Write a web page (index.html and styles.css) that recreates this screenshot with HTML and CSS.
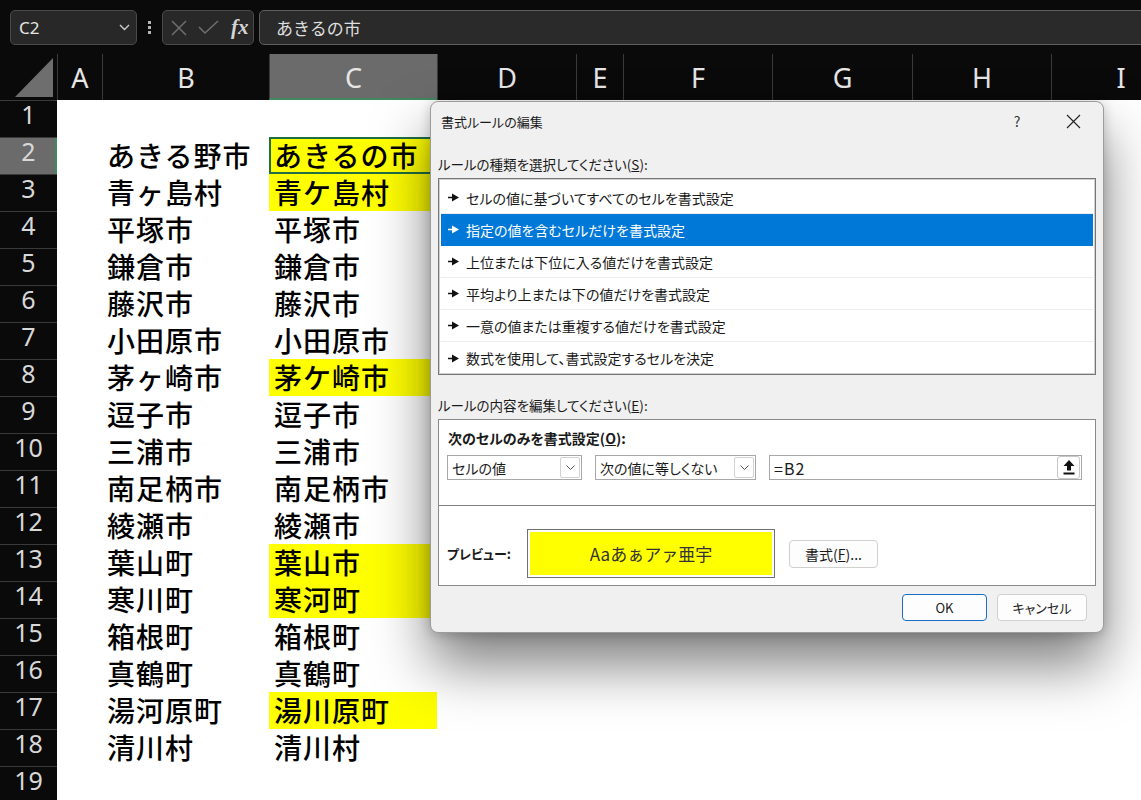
FILE: index.html
```html
<!DOCTYPE html>
<html lang="ja">
<head>
  <meta charset="UTF-8" />
  <title>書式ルールの編集</title>
  <link rel="stylesheet" href="styles.css">
</head>
<body>
  <!-- 数式バー -->
  <div class="formula-bar">
    <div class="name-box">
      <span>C2</span>
      <svg width="11" height="7" viewBox="0 0 11 7"><polyline points="1,1 5.5,5.5 10,1" fill="none" stroke="#cfcfcf" stroke-width="1.4"/></svg>
    </div>
    <div class="dots"><i></i><i></i><i></i></div>
    <div class="func-box">
      <svg width="16" height="16" viewBox="0 0 16 16"><path d="M1 1 L15 15 M15 1 L1 15" stroke="#6f6f6f" stroke-width="1.5"/></svg>
      <svg width="21" height="15" viewBox="0 0 21 15"><polyline points="1,7 7,13 20,1" fill="none" stroke="#6f6f6f" stroke-width="1.5"/></svg>
      <span class="fx">fx</span>
    </div>
    <div class="formula">あきるの市</div>
  </div>

  <!-- シート -->
  <div class="sheet">
    <div class="col-head">
      <div class="corner"><svg width="57" height="46" viewBox="0 0 57 46"><polygon points="15,43 53,4 53,43" fill="#6e6e6e"/></svg></div>
      <div>A</div><div>B</div><div class="active">C</div><div>D</div><div>E</div><div>F</div><div>G</div><div>H</div><div>I</div>
    </div>

    <div class="row"><span class="rh">1</span><span></span><span class="cell"></span><span class="cell"></span></div>
    <div class="row"><span class="rh active">2</span><span></span><span class="cell">あきる野市</span><span class="cell hl sel">あきるの市</span></div>
    <div class="row"><span class="rh">3</span><span></span><span class="cell">青ヶ島村</span><span class="cell hl">青ケ島村</span></div>
    <div class="row"><span class="rh">4</span><span></span><span class="cell">平塚市</span><span class="cell">平塚市</span></div>
    <div class="row"><span class="rh">5</span><span></span><span class="cell">鎌倉市</span><span class="cell">鎌倉市</span></div>
    <div class="row"><span class="rh">6</span><span></span><span class="cell">藤沢市</span><span class="cell">藤沢市</span></div>
    <div class="row"><span class="rh">7</span><span></span><span class="cell">小田原市</span><span class="cell">小田原市</span></div>
    <div class="row"><span class="rh">8</span><span></span><span class="cell">茅ヶ崎市</span><span class="cell hl">茅ケ崎市</span></div>
    <div class="row"><span class="rh">9</span><span></span><span class="cell">逗子市</span><span class="cell">逗子市</span></div>
    <div class="row"><span class="rh">10</span><span></span><span class="cell">三浦市</span><span class="cell">三浦市</span></div>
    <div class="row"><span class="rh">11</span><span></span><span class="cell">南足柄市</span><span class="cell">南足柄市</span></div>
    <div class="row"><span class="rh">12</span><span></span><span class="cell">綾瀬市</span><span class="cell">綾瀬市</span></div>
    <div class="row"><span class="rh">13</span><span></span><span class="cell">葉山町</span><span class="cell hl">葉山市</span></div>
    <div class="row"><span class="rh">14</span><span></span><span class="cell">寒川町</span><span class="cell hl">寒河町</span></div>
    <div class="row"><span class="rh">15</span><span></span><span class="cell">箱根町</span><span class="cell">箱根町</span></div>
    <div class="row"><span class="rh">16</span><span></span><span class="cell">真鶴町</span><span class="cell">真鶴町</span></div>
    <div class="row"><span class="rh">17</span><span></span><span class="cell">湯河原町</span><span class="cell hl">湯川原町</span></div>
    <div class="row"><span class="rh">18</span><span></span><span class="cell">清川村</span><span class="cell">清川村</span></div>
    <div class="row"><span class="rh">19</span><span></span><span class="cell"></span><span class="cell"></span></div>
  </div>

  <!-- ダイアログ -->
  <div class="dialog">
    <div class="dlg-title">
      <span>書式ルールの編集</span>
      <span class="tbtn help">?</span>
      <span class="tbtn"><svg width="15" height="15" viewBox="0 0 15 15"><path d="M1 1 L14 14 M14 1 L1 14" stroke="#222" stroke-width="1.1"/></svg></span>
    </div>

    <div class="dlg-body">
      <div class="lbl">ルールの種類を選択してください(<u>S</u>):</div>
      <div class="rule-list">
        <div class="item"><svg class="arw" width="11" height="9" viewBox="0 0 11 9"><path d="M0 3.7 H5 V5.3 H0 Z M4 0.5 L11 4.5 L4 8.5 Z"/></svg>セルの値に基づいてすべてのセルを書式設定</div>
        <div class="item selected"><svg class="arw" width="11" height="9" viewBox="0 0 11 9"><path d="M0 3.7 H5 V5.3 H0 Z M4 0.5 L11 4.5 L4 8.5 Z"/></svg>指定の値を含むセルだけを書式設定</div>
        <div class="item"><svg class="arw" width="11" height="9" viewBox="0 0 11 9"><path d="M0 3.7 H5 V5.3 H0 Z M4 0.5 L11 4.5 L4 8.5 Z"/></svg>上位または下位に入る値だけを書式設定</div>
        <div class="item"><svg class="arw" width="11" height="9" viewBox="0 0 11 9"><path d="M0 3.7 H5 V5.3 H0 Z M4 0.5 L11 4.5 L4 8.5 Z"/></svg>平均より上または下の値だけを書式設定</div>
        <div class="item"><svg class="arw" width="11" height="9" viewBox="0 0 11 9"><path d="M0 3.7 H5 V5.3 H0 Z M4 0.5 L11 4.5 L4 8.5 Z"/></svg>一意の値または重複する値だけを書式設定</div>
        <div class="item last"><svg class="arw" width="11" height="9" viewBox="0 0 11 9"><path d="M0 3.7 H5 V5.3 H0 Z M4 0.5 L11 4.5 L4 8.5 Z"/></svg>数式を使用して、書式設定するセルを決定</div>
      </div>

      <div class="lbl lbl2">ルールの内容を編集してください(<u>E</u>):</div>
      <div class="panel">
        <div class="cond">
          <div class="cond-head">次のセルのみを書式設定(<u>O</u>):</div>
          <div class="controls">
            <div class="select s1">セルの値<span class="chev"><svg width="9" height="5" viewBox="0 0 9 5"><polyline points="0.5,0.5 4.5,4.5 8.5,0.5" fill="none" stroke="#555" stroke-width="1"/></svg></span></div>
            <div class="select s2">次の値に等しくない<span class="chev"><svg width="9" height="5" viewBox="0 0 9 5"><polyline points="0.5,0.5 4.5,4.5 8.5,0.5" fill="none" stroke="#555" stroke-width="1"/></svg></span></div>
            <div class="select ref">=B2<span class="up"><svg width="12" height="15" viewBox="0 0 12 15"><path d="M6 0 L11.5 6 H8 V10.5 H4 V6 H0.5 Z M0.5 12.5 H11.5 V14.5 H0.5 Z" fill="#111"/></svg></span></div>
          </div>
        </div>
        <div class="preview-row">
          <div class="pv-label">プレビュー:</div>
          <div class="pv-box"><div class="pv-fill">Aaあぁアァ亜宇</div></div>
          <div class="btn fmt">書式(<u>F</u>)...</div>
        </div>
      </div>

      <div class="btn-row">
        <div class="btn ok">OK</div>
        <div class="btn cancel">キャンセル</div>
      </div>
    </div>
  </div>
</body>
</html>
```

FILE: styles.css
```css
body {
  margin: 0;
  width: 1141px;
  height: 800px;
  overflow: hidden;
  position: relative;
  background: #0a0a0a;
  font-family: "Noto Sans CJK JP", sans-serif;
}

/* formula bar */
.formula-bar {
  display: flex;
  height: 35px;
  padding: 10px 0 9px 10px;
}
.name-box {
  width: 127px;
  box-sizing: border-box;
  border: 1px solid #4a4a4a;
  border-radius: 5px;
  background: #282828;
  display: flex;
  align-items: center;
  justify-content: space-between;
  padding: 0 6px 0 8px;
  color: #e4e4e4;
  font-family: "Noto Sans", sans-serif;
  font-size: 17px;
}
.dots {
  width: 25px;
  display: flex;
  flex-direction: column;
  align-items: center;
  justify-content: center;
  gap: 2px;
}
.dots i {
  width: 3px;
  height: 3px;
  background: #b5b5b5;
}
.func-box {
  width: 92px;
  box-sizing: border-box;
  border: 1px solid #4a4a4a;
  border-radius: 5px;
  background: #282828;
  display: flex;
  align-items: center;
  padding-left: 8px;
  gap: 11px;
}
.fx {
  font-family: "Liberation Serif", serif;
  font-style: italic;
  font-weight: bold;
  font-size: 21px;
  color: #d4d4d4;
  margin-left: 1px;
}
.formula {
  flex: 1;
  margin-left: 5px;
  margin-right: -10px;
  border: 1px solid #5e5e5e;
  border-radius: 5px;
  background: #2a2a2a;
  color: #dedede;
  font-size: 17px;
  line-height: 33px;
  padding-left: 16px;
}

/* sheet */
.col-head {
  display: grid;
  grid-template-columns: 57px 45px 167px 168px 139px 47px 149px 140px 139px 139px;
  height: 46px;
}
.col-head div {
  border-left: 1px solid #3a3a3a;
  color: #e6e6e6;
  font-family: "Noto Sans", sans-serif;
  font-size: 27px;
  display: flex;
  align-items: center;
  justify-content: center;
}
.col-head .corner {
  border-left: none;
  align-items: flex-start;
  justify-content: flex-start;
}
.col-head .active {
  background: #6b6b6b;
  border-bottom: 2px solid #3f8a5f;
  box-sizing: border-box;
  padding-top: 2px;
}
.row {
  display: grid;
  grid-template-columns: 57px 45px 167px 168px 1fr;
  height: 37px;
  background: #fff;
}
.rh {
  background: #0a0a0a;
  color: #d8d8d8;
  border-top: 1px solid #3a3a3a;
  font-family: "Noto Sans", sans-serif;
  font-size: 25px;
  line-height: 26px;
  text-align: center;
}
.rh.active {
  background: #6b6b6b;
  box-shadow: inset -2px 0 0 #3f8a5f;
}
.cell {
  font-size: 28px;
  font-weight: 500;
  color: #000;
  line-height: 37px;
  letter-spacing: 1px;
  padding-left: 5px;
  white-space: nowrap;
}
.hl {
  background: #ffff00;
}
.sel {
  box-shadow: inset 0 0 0 2px #1f6f43;
}

/* dialog */
.dialog {
  position: absolute;
  left: 430px;
  top: 101px;
  width: 674px;
  height: 532px;
  box-sizing: border-box;
  background: #f0f0f0;
  border: 1px solid #9c9c9c;
  border-radius: 8px;
  box-shadow: 0 32px 56px rgba(0, 0, 0, 0.5), 0 2px 12px rgba(0, 0, 0, 0.2);
  font-feature-settings: "palt";
  color: #1a1a1a;
}
.dlg-title {
  height: 38px;
  display: flex;
  align-items: center;
  padding-left: 10px;
  font-size: 13px;
}
.dlg-title span:first-child {
  flex: 1;
}
.tbtn {
  width: 56px;
  display: flex;
  justify-content: center;
  align-items: center;
}
.tbtn.help {
  font-size: 14px;
  color: #333;
}
.tbtn:last-child {
  margin-right: 2px;
}
.dlg-body {
  padding: 0 7px;
}
.lbl {
  margin-top: 14px;
  font-size: 13.5px;
  line-height: 20px;
}
.lbl2 {
  margin-top: 20px;
}
.rule-list {
  margin-top: 4px;
  height: 197px;
  box-sizing: border-box;
  border: 1px solid #767676;
  box-shadow: inset 0 0 0 1px #d0d0d0;
  background: #fff;
  padding: 3px 2px 0;
}
.item {
  height: 32px;
  box-sizing: border-box;
  border-bottom: 1px solid #ececec;
  display: flex;
  align-items: center;
  padding-left: 7px;
  gap: 7px;
  font-size: 14px;
}
.item.last {
  border-bottom: none;
}
.item.selected {
  background: #0078d7;
  color: #fff;
  border-bottom-color: #0078d7;
}
.arw {
  fill: #111;
}
.selected .arw {
  fill: #fff;
}
.panel {
  margin-top: 4px;
  height: 167px;
  box-sizing: border-box;
  border: 1px solid #8a8a8a;
  background: #fff;
}
.cond {
  height: 86px;
  box-sizing: border-box;
  border-bottom: 1px solid #808080;
  padding: 8px 8px 0;
}
.cond-head {
  font-size: 14px;
  font-weight: bold;
  line-height: 20px;
  padding-left: 1px;
}
.controls {
  display: flex;
  gap: 13px;
  margin-top: 7px;
}
.select {
  height: 25px;
  box-sizing: border-box;
  border: 1px solid #a8a8a8;
  background: #fff;
  display: flex;
  align-items: center;
  padding-left: 4px;
  font-size: 14px;
}
.s1 { width: 135px; }
.s2 { width: 161px; }
.ref { width: 313px; font-size: 16px; letter-spacing: 1px; }
.chev, .up {
  margin-left: auto;
  margin-right: 1px;
  width: 20px;
  height: 21px;
  box-sizing: border-box;
  border: 1px solid #d2d2d2;
  border-radius: 2px;
  display: flex;
  align-items: center;
  justify-content: center;
}
.up {
  width: 23px;
  height: 23px;
  border-radius: 3px;
  border-color: #c8c8c8;
}
.preview-row {
  display: flex;
  align-items: center;
  padding: 23px 8px 0;
}
.pv-label {
  width: 80px;
  font-size: 13px;
  font-weight: bold;
}
.pv-box {
  width: 248px;
  height: 49px;
  box-sizing: border-box;
  border: 1px solid #707070;
  padding: 2px;
}
.pv-fill {
  height: 100%;
  background: #ffff00;
  display: flex;
  align-items: center;
  justify-content: center;
  font-size: 17px;
  color: #333;
  font-feature-settings: normal;
}
.btn {
  height: 27px;
  box-sizing: border-box;
  border: 1px solid #d0d0d0;
  border-radius: 4px;
  background: #fdfdfd;
  display: flex;
  align-items: center;
  justify-content: center;
  font-size: 13px;
}
.fmt {
  width: 89px;
  height: 28px;
  margin-left: 14px;
  font-size: 14px;
}
.btn-row {
  display: flex;
  justify-content: flex-end;
  gap: 10px;
  margin-top: 8px;
  padding-right: 9px;
}
.ok {
  width: 85px;
  border-color: #1b6fc2;
}
.cancel {
  width: 90px;
}
```
